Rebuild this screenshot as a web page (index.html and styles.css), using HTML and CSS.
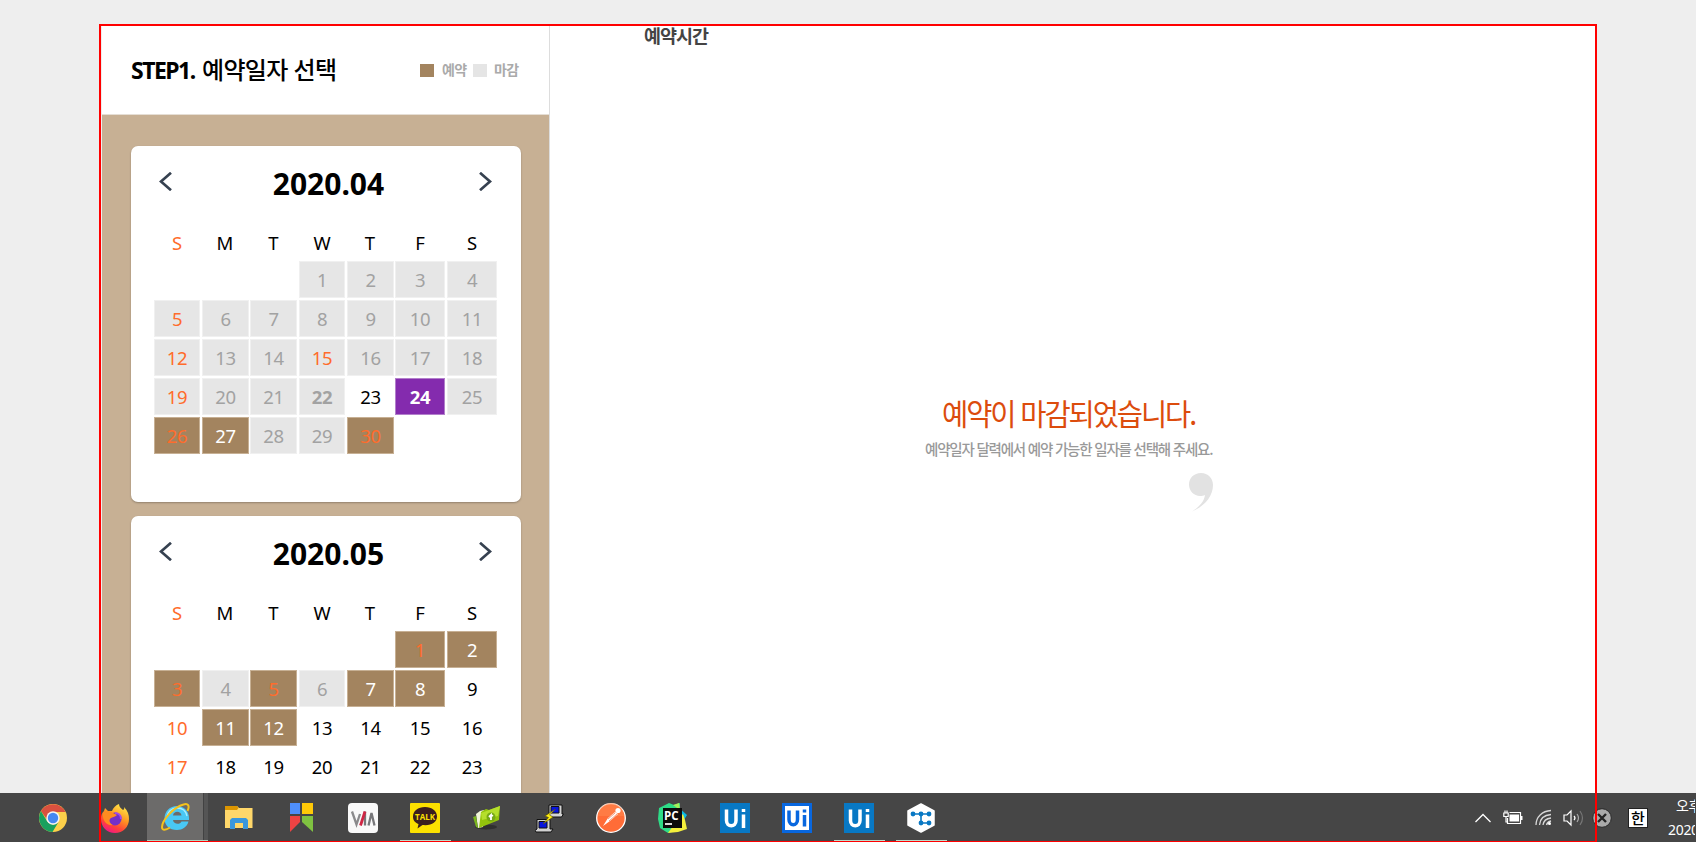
FILE: index.html
```html
<!DOCTYPE html>
<html lang="ko">
<head>
<meta charset="utf-8">
<title>예약일자 선택</title>
<link rel="stylesheet" href="styles.css">
</head>
<body>
<div class="screen">
  <main class="page">
    <section class="side">
      <header class="side-head">
        <h1><span class="step">STEP1.</span><span class="step-ko">예약일자 선택</span></h1>
        <div class="legend"><i class="sw open"></i><span>예약</span><i class="sw closed"></i><span>마감</span></div>
      </header>
      <div class="calendars">
        <article class="card">
          <div class="card-head">
            <svg class="arrow" width="13" height="19" viewBox="0 0 13 19"><path d="M12 .8 2 9.5l10 8.7"/></svg>
            <h2>2020.04</h2>
            <svg class="arrow" width="13" height="19" viewBox="0 0 13 19"><path d="M1 .8l10 8.7L1 18.200"/></svg>
          </div>
          <div class="week"><b class="sun">S</b><b>M</b><b>T</b><b>W</b><b>T</b><b>F</b><b>S</b></div>
          <div class="days">
            <span></span><span></span><span></span><span class="off">1</span><span class="off">2</span><span class="off">3</span><span class="off">4</span>
            <span class="off hol">5</span><span class="off">6</span><span class="off">7</span><span class="off">8</span><span class="off">9</span><span class="off">10</span><span class="off">11</span>
            <span class="off hol">12</span><span class="off">13</span><span class="off">14</span><span class="off hol">15</span><span class="off">16</span><span class="off">17</span><span class="off">18</span>
            <span class="off hol">19</span><span class="off">20</span><span class="off">21</span><span class="off strong">22</span><span>23</span><span class="picked strong">24</span><span class="off">25</span>
            <span class="on hol">26</span><span class="on">27</span><span class="off">28</span><span class="off">29</span><span class="on hol">30</span><span></span><span></span>
          </div>
        </article>
        <article class="card">
          <div class="card-head">
            <svg class="arrow" width="13" height="19" viewBox="0 0 13 19"><path d="M12 .8 2 9.5l10 8.7"/></svg>
            <h2>2020.05</h2>
            <svg class="arrow" width="13" height="19" viewBox="0 0 13 19"><path d="M1 .8l10 8.7L1 18.200"/></svg>
          </div>
          <div class="week"><b class="sun">S</b><b>M</b><b>T</b><b>W</b><b>T</b><b>F</b><b>S</b></div>
          <div class="days">
            <span></span><span></span><span></span><span></span><span></span><span class="on hol">1</span><span class="on">2</span>
            <span class="on hol">3</span><span class="off">4</span><span class="on hol">5</span><span class="off">6</span><span class="on">7</span><span class="on">8</span><span>9</span>
            <span class="hol">10</span><span class="on">11</span><span class="on">12</span><span>13</span><span>14</span><span>15</span><span>16</span>
            <span class="hol">17</span><span>18</span><span>19</span><span>20</span><span>21</span><span>22</span><span>23</span>
          </div>
        </article>
      </div>
    </section>
    <section class="content">
      <h3>예약시간</h3>
      <div class="notice">
        <p class="notice-title">예약이 마감되었습니다.</p>
        <p class="notice-sub">예약일자 달력에서 예약 가능한 일자를 선택해 주세요.</p>
        <svg class="quote" width="24" height="39" viewBox="0 0 24 39"><path d="M12 0C5 0 0 5 0 11.500S5 23 11 23c2 0 3.500-.3 5-1C15 29 10 34 3 38.500 16 33 24 23 24 12 24 5 19 0 12 0z"/></svg>
      </div>
    </section>
  </main>

  <footer class="taskbar">
    <nav class="apps">
      <div class="app"><svg width="28" height="28" viewBox="0 0 28 28"><circle cx="14" cy="14" r="14" fill="#fdd04a"/><path d="M1.900 7A14 14 0 0 1 26.500 8H14a6 6 0 0 0-5.600 8z" fill="#d9503f"/><path d="M1.900 7A14 14 0 0 0 13.500 28l5.700-9.500A7 7 0 0 1 8 17z" fill="#18a05e"/><circle cx="14" cy="14" r="6.700" fill="#f3f3f3"/><circle cx="14" cy="14" r="5.200" fill="#4688f1"/></svg></div>
      <div class="app"><svg width="28" height="29" viewBox="0 0 28 29"><defs><linearGradient id="fx" x1=".8" y1="0" x2=".3" y2="1"><stop offset="0" stop-color="#fff04a"/><stop offset=".45" stop-color="#ff9422"/><stop offset=".75" stop-color="#ff4338"/><stop offset="1" stop-color="#f0148a"/></linearGradient></defs><path d="M18 0c0 3 2 4 4 6 2-1 1-2 1-3 4 4 5 8 5 12 0 8-6 14-14 14S0 23 0 15c0-4 1-6 3-8l1-3 3 3h4c1-3 4-6 7-7z" fill="url(#fx)"/><circle cx="14" cy="15" r="6.500" fill="#7330c8"/><path d="M2 9c4-3 7-2 10 0l4 2c-2 2-5 2-6 3-3 2-1 6 2 7-6 1-11-4-10-12z" fill="#ff8b20"/><path d="M14 9c3 0 6 2 6 6" fill="none" stroke="#a34be8" stroke-width="2"/></svg></div>
      <div class="app active"><svg width="29" height="28" viewBox="0 0 29 28"><path d="M3.500 15.500C3.500 8 9 3 16 3s12 5 12 12v2H12c.5 4.500 7 5 8.500 1.500H27.500C26 24 21.500 27 16 27 8.500 27 3.500 22.500 3.500 15.500zM12 12.500h8.500c-.5-5-8-5-8.500 0z" fill="#49c8f5" fill-rule="evenodd"/><path d="M6 14C6.500 8.500 10.500 5 16 5c5 0 9 3 10 8" fill="none" stroke="#a8ecff" stroke-width="1.300"/><path d="M26.500 8C29 2.500 27 0 22.500 1.500 13 4 1 17 1 24c0 4 4 3 8 .5" fill="none" stroke="#f5c21c" stroke-width="2"/></svg></div>
      <div class="app"><svg width="28" height="24" viewBox="0 0 28 24"><path d="M0 0h12l2 2h13.500v20H0z" fill="#ffd76a"/><path d="M0 0h12l1.500 2L12 4H0z" fill="#dc9500"/><path d="M5 23V14l2-2h14l2 2v9h-5v-6h-8v6z" fill="#3a97dc"/></svg></div>
      <div class="app"><svg class="lift" width="23" height="29" viewBox="0 0 23 29"><path d="M0 0h10v11H0z" fill="#4f8ffb"/><path d="M12 0h11v11H12z" fill="#ffc907"/><path d="M0 13h10v6L0 29z" fill="#ed4343"/><path d="M12 13h11v16L12 19z" fill="#7fc241"/></svg></div>
      <div class="app"><svg width="30" height="30" viewBox="0 0 30 30"><rect width="30" height="30" rx="4" fill="#f9f9f9"/><path d="M4 8.500l4.500 13L12 11" fill="none" stroke="#8a8a8c" stroke-width="2.300"/><path d="M17 8.500v14M20.500 22.500 23.500 10l3 12.500" fill="none" stroke="#77777a" stroke-width="2.300"/><path d="M12.500 22.500 17 8.500" stroke="#cf2544" stroke-width="2.800"/></svg></div>
      <div class="app running"><svg width="30" height="30" viewBox="0 0 30 30"><rect width="30" height="30" rx="1" fill="#fce000"/><path d="M15 4C8 4 3 8 3 13.500c0 4 2 6 5.500 7.500l-1 4.500 5-3.500c9 1 14.500-3 14.500-8.500S22 4 15 4z" fill="#3b1e1e"/><text x="15" y="16.500" class="talk">TALK</text></svg></div>
      <div class="app"><svg width="28" height="24" viewBox="0 0 28 24"><ellipse cx="13" cy="21" rx="11" ry="2.500" fill="#303030"/><path d="M3 8l4-3 4-1-1 17-5 1z" fill="#f0f5d8"/><path d="M0 11l3-1 2 12-2-1z" fill="#79b51c"/><path d="M8 6l5-3 3 1 11-4-1 14-20 8z" fill="#93c30c"/><path d="M8 7l19-7-2 10-16 4z" fill="#b5df2c"/><circle cx="18" cy="11" r="4.500" fill="#76a816"/><path d="M18 14V9l-2 2m2-2 2 1" stroke="#fff" stroke-width="1.800" fill="none"/></svg></div>
      <div class="app"><svg width="29" height="29" viewBox="0 0 29 29" stroke="#111" stroke-width="1"><path d="M14 1h13v9h1.500l-2 3H13l-2-1.500 3-1.500z" fill="#d3d3d3"/><path d="M16 2.500h8v6.500h-8z" fill="#0714df"/><path d="M2 15.500h13V25h3l-2 3H1l-1-1.500L2 25z" fill="#d3d3d3"/><path d="M4 17.500h8V24H4z" fill="#0714df"/><path d="M20.500 5 10 12l3.500 1.500L8 20l10-7-3.500-2z" fill="#ffee13" stroke="#574f00" stroke-width=".6"/></svg></div>
      <div class="app"><svg width="30" height="30" viewBox="0 0 30 30"><circle cx="15" cy="15" r="14.300" fill="#ff6c37" stroke="#fff" stroke-width="1.300"/><path d="M2 13a13 13 0 0 1 26 0z" fill="#ff8851" opacity=".55"/><circle cx="22" cy="7.500" r="2.600" fill="#fff"/><path d="M19 9l3 2-8 7-7 5 5-8z" fill="#fff"/><path d="M12 16l7-6m-6 8 8-7" stroke="#ed7048" stroke-width=".7"/></svg></div>
      <div class="app"><svg width="30" height="30" viewBox="0 0 30 30"><path d="M1 5l10-5 5 2 6-2v7l-8 22-4 1-8-5L0 16z" fill="#2edb87"/><path d="M20 4l9 8-5 8-8-8z" fill="#0cbbe5"/><path d="M25 11l2 6 2 9-9 3-10 1 10-14z" fill="#f4ef3c"/><path d="M15 2l6-2 1 7z" fill="#a5ef59"/><rect x="5" y="5" width="19" height="20" fill="#0b0b0b"/><text x="6" y="16.500" class="pc">PC</text><path d="M7 21h7" stroke="#fff" stroke-width="1.700"/></svg></div>
      <div class="app"><svg width="30" height="30" viewBox="0 0 30 30"><rect width="30" height="30" fill="#0878c4"/><g class="ui white"><path d="M6.500 6.500v11c0 7 9.500 7 9.500 0v-11M23.500 11.500V25"/><path d="M23.500 6v3"/></g></svg></div>
      <div class="app"><svg width="30" height="30" viewBox="0 0 30 30"><rect width="30" height="30" fill="#0867df"/><path d="M3 3h24v24H3z" fill="#fff"/><g class="ui blue"><path d="M7 7.500v9c0 7 8.500 7 8.500 0v-9M22.500 12v11.500"/><path d="M22.500 6.500v3"/></g></svg></div>
      <div class="app running"><svg width="30" height="30" viewBox="0 0 30 30"><rect width="30" height="30" fill="#0878c4"/><g class="ui white"><path d="M6.500 6.500v11c0 7 9.500 7 9.500 0v-11M23.500 11.500V25"/><path d="M23.500 6v3"/></g></svg></div>
      <div class="app running"><svg width="30" height="30" viewBox="0 0 30 30"><path d="M15 1l13 7v14l-13 7-13-7V8z" fill="#fff" stroke="#fff" stroke-width="1.500" stroke-linejoin="round"/><path d="M7 11h16M15 11v9h8" fill="none" stroke="#0878c4" stroke-width="1.600"/><g fill="#0878c4"><circle cx="7" cy="11" r="2.400"/><circle cx="15" cy="11" r="2.400"/><circle cx="23" cy="11" r="2.400"/><circle cx="15" cy="20" r="2.400"/><circle cx="23" cy="20" r="2.400"/></g></svg></div>
    </nav>
    <div class="tray">
      <svg width="18" height="20" viewBox="0 0 18 20"><path d="M1.500 14 9 6.500l7.500 7.500" fill="none" stroke="#fff" stroke-width="1.300"/></svg>
      <svg width="20" height="20" viewBox="0 0 20 20"><path d="M.8 5h4.400v3.500H.8zM2 5V2.500M4 5V2.500M3 8.500V14h2" fill="none" stroke="#fff" stroke-width="1.200"/><path d="M6.500 4.500h11v11H4.500V10" fill="none" stroke="#fff" stroke-width="1.200"/><path d="M6.500 6.500H16v7H6.500zM18 8h1.500v4H18z" fill="#fff"/></svg>
      <svg width="17" height="20" viewBox="0 0 17 20" fill="none" stroke="#d8d8d8" stroke-width="1.300"><path d="M1 17C1 9 7 3 16 2.500M4.500 17C5 11 9 7 16 6.500M8 17c.5-4 3.500-6.500 8-7M11.500 17c.5-2 2-3.500 4.500-4"/><circle cx="14.500" cy="15.500" r="1.500" fill="#fff" stroke="none"/></svg>
      <svg width="21" height="20" viewBox="0 0 21 20" fill="none" stroke="#fff" stroke-width="1.200"><path d="M1 7h3l4-4v14l-4-4H1zM11 8q2 2 0 4"/><path d="M14 6q3 4 0 8" stroke="#aaa"/><path d="M17 3q5 7 0 14" stroke="#777"/></svg>
      <svg width="20" height="20" viewBox="0 0 20 20"><circle cx="10" cy="10" r="9.300" fill="#aaa" stroke="#292929"/><path d="M6 6l8 8m0-8-8 8" stroke="#242424" stroke-width="2.400"/></svg>
      <span class="ime">한</span>
      <div class="clock"><span>오후</span><span>2020</span></div>
    </div>
  </footer>
  <div class="frame"></div>
</div>
</body>
</html>
```
FILE: styles.css
```css
* { box-sizing: border-box; }
body { margin: 0; background: #fff; font-family: "Noto Sans", "Noto Sans CJK KR", sans-serif; color: #000; }
h1, h2, h3, p { margin: 0; }
svg { display: block; flex: none; }
.screen { position: relative; width: 1696px; height: 867px; overflow: hidden; }
.page { display: flex; height: 793px; padding: 25px 99px 0 102px; background: #eee; overflow: hidden; }
.side { width: 448px; flex: none; border-right: 1px solid #ddd; background: #c7b094; }
.side-head { display: flex; justify-content: space-between; height: 90px; padding: 0 29px 0 29px; background: #fff; border-bottom: 1px solid #e5ded5; }
.side-head h1 { display: flex; height: 36px; margin-top: 27px; line-height: 36px; font-size: 23px; font-weight: 700; white-space: nowrap; }
.step { width: 71px; letter-spacing: -1.5px; }
.step-ko { font-family: "Noto Sans CJK KR", sans-serif; font-size: 24px; font-weight: 500; letter-spacing: -.7px; margin-top: -1px; }
.legend { display: flex; align-items: center; height: 22px; margin-top: 34px; font: 700 14px/22px "Noto Sans CJK KR", sans-serif; color: #aaa; letter-spacing: -.7px; }
.legend span { width: 26px; margin: -2px 5px 0 0; white-space: nowrap; }
.legend span:last-child { margin-right: 0; }
.sw { width: 14px; height: 13px; margin-right: 8px; }
.sw.closed { margin-right: 7px; }
.open { background: #a3845f; }
.closed { background: #e5e5e5; }
.calendars { display: flex; flex-direction: column; gap: 14px; padding: 31px 28px 0 29px; }
.card { height: 356px; flex: none; padding: 0 24px 0 23px; background: #fff; border-radius: 7px; box-shadow: 0 1px 2px #0004; }
.card-head { display: flex; justify-content: space-between; align-items: flex-start; height: 76px; padding: 26px 5px 0; }
.card-head h2 { font-size: 30px; line-height: 40px; font-weight: 700; margin-top: -8px; margin-left: 6px; letter-spacing: 0; }
.arrow path { fill: none; stroke: #364150; stroke-width: 2.700; }
.week, .days { display: grid; grid-template-columns: 48px 48px 49px 48px 48px 52px 50px; font-size: 18.500px; text-align: center; }
.week { height: 39px; line-height: 41px; }
.week b { font-weight: 400; margin-right: 2px; }
.week b:last-child { margin-right: 0; }
.week .sun, .days .hol { color: #ff6c2c; }
.days { grid-auto-rows: 37px; row-gap: 2px; }
.days span { margin-right: 2px; line-height: 36px; border: 1px solid transparent; letter-spacing: -.35px; }
.days span:nth-child(7n+2), .days span:nth-child(7n+5) { margin-right: 1px; }
.days span:nth-child(7n) { margin-right: 0; }
.days .off { background: #e6e6e6; border-color: #f0f0f0; color: #a2a2a2; }
.days .on { background: #a3845f; border-color: #c7b094; color: #fff; }
.days .picked { background: #842bae; border-color: #b27fcb; color: #fff; }
.days .off.hol, .days .on.hol { color: #ff6c2c; }
.days .strong { font-weight: 700; }
.content { flex: 1; background: #fff; font-family: "Noto Sans CJK KR", sans-serif; }
.content h3 { height: 22px; margin-left: 94px; font-size: 18.500px; font-weight: 700; line-height: 20px; letter-spacing: -1px; color: #444; }
.notice { display: flex; flex-direction: column; width: 288px; margin: 345px 0 0 375px; white-space: nowrap; }
.notice-title { height: 44px; padding-left: 17px; font-size: 30px; line-height: 41px; letter-spacing: -2.200px; color: #dc4c0d; transform: scaleX(.95); transform-origin: 17px 0; }
.notice-sub { height: 24px; font-size: 14.500px; line-height: 26px; font-weight: 500; letter-spacing: -1.200px; color: #999; }
.quote { align-self: flex-end; margin-top: 13px; fill: #e2e2e2; }
.taskbar { display: flex; justify-content: space-between; height: 49px; background: #464646; overflow: hidden; }
.apps { display: flex; padding-left: 22px; }
.app { display: flex; align-items: center; justify-content: center; width: 62px; height: 49px; padding-top: 1px; }
.app.active { width: 61px; padding-right: 4px; border-bottom: 2px solid #a9d8c2; background: linear-gradient(90deg, #6c6b6a 0 56px, #424242 56px 57px, #555 57px); }
.app:nth-child(2) { width: 63px; padding-right: 1px; }
.lift { margin-top: -2px; }
.app.running { background: linear-gradient(#b8dcca, #b8dcca) center 47px / 51px 1px no-repeat; }
.ui { fill: none; stroke-width: 3.500; }
.white { stroke: #fff; }
.blue { stroke: #0867df; }
.talk { font: 700 8px "Open Sans", sans-serif; fill: #fce000; text-anchor: middle; }
.pc { font: 700 11.500px "Open Sans", sans-serif; fill: #fff; }
.tray { display: flex; align-items: center; width: 222px; flex: none; }
.tray svg:nth-child(2) { margin-left: 11px; }
.tray svg:nth-child(3) { margin-left: 12px; }
.tray svg:nth-child(4) { margin-left: 11px; }
.tray svg:nth-child(5) { margin-left: 8px; }
.ime { width: 20px; height: 20px; margin: 1px 0 0 16px; flex: none; border: 1px solid #222; background: #fff; font: 500 15px/17px "Noto Sans CJK KR", sans-serif; text-align: center; }
.clock { display: flex; flex-direction: column; width: 27px; height: 49px; margin-left: 20px; flex: none; overflow: hidden; color: #fff; font-size: 14px; white-space: nowrap; }
.clock span { height: 24px; line-height: 25px; letter-spacing: -.3px; }
.clock span:first-child { padding-left: 8px; }
.frame { position: absolute; left: 99px; top: 24px; width: 1498px; height: 818px; border: 2px solid #f00; border-bottom-width: 1px; }
```
